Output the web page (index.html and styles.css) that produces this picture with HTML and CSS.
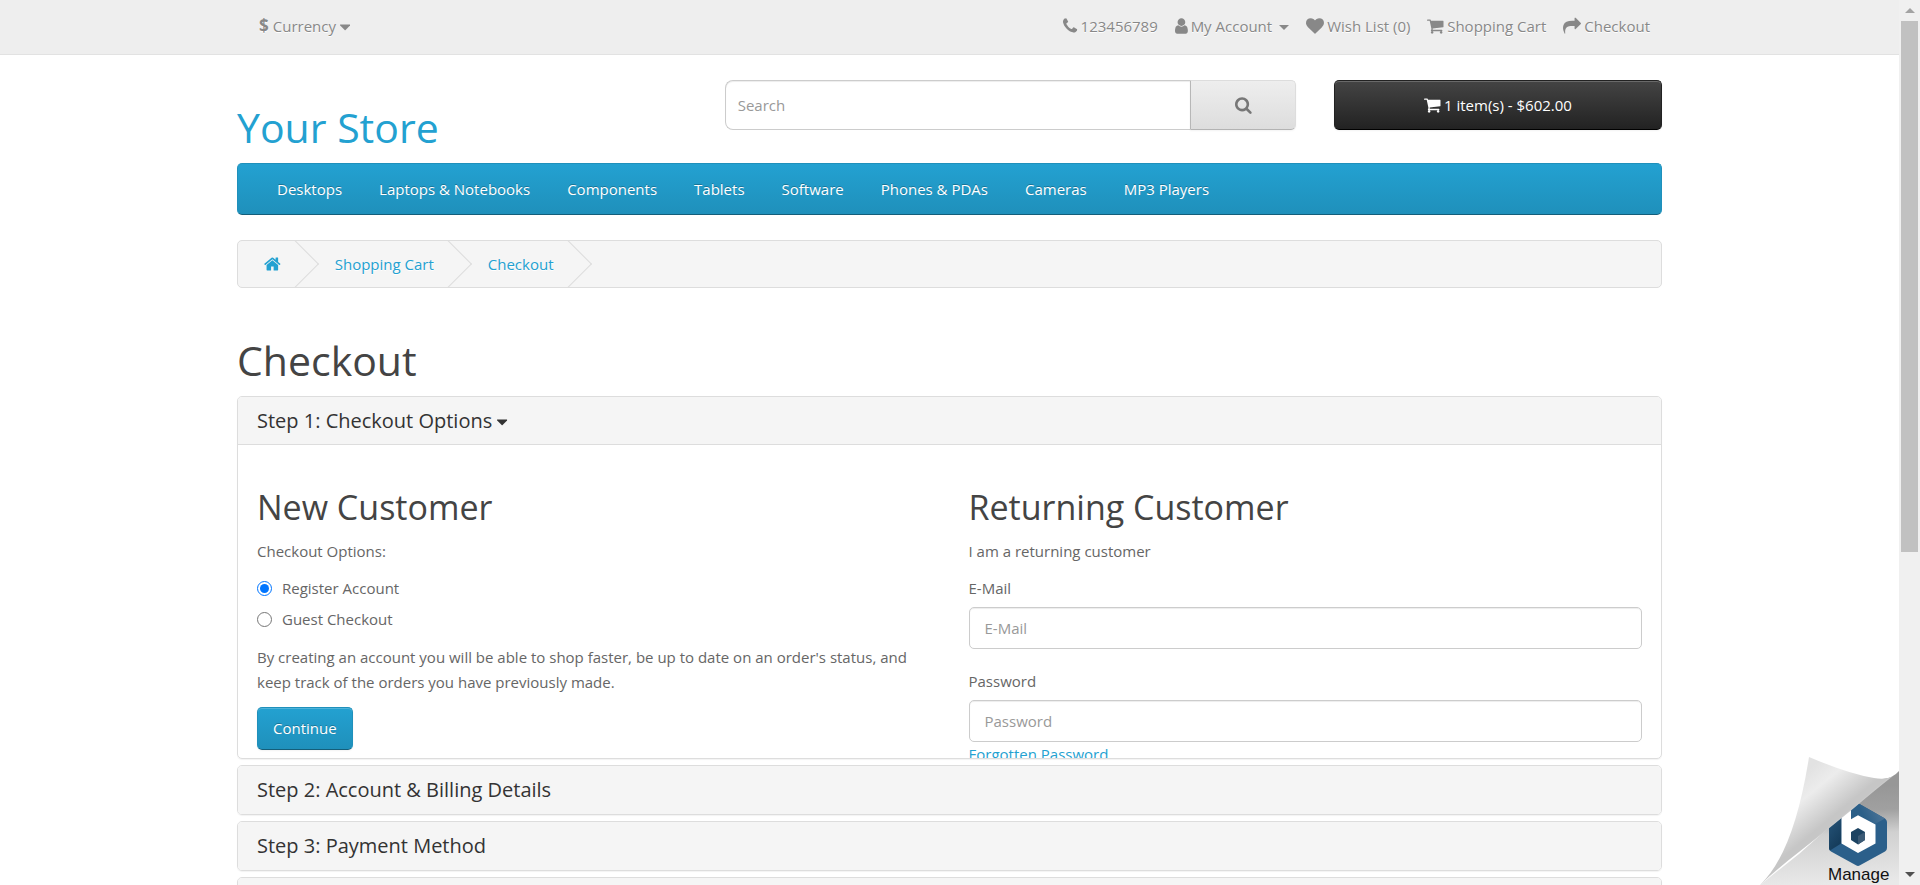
FILE: index.html
```html
<!DOCTYPE html>
<html lang="en">
<head>
<meta charset="utf-8">
<title>Checkout</title>
<link rel="stylesheet" href="styles.css">
</head>
<body>
<svg class="sprite" aria-hidden="true">
  <symbol id="cart" viewBox="64 0 1664 1792"><path d="M704 1536q0 52-38 90t-90 38-90-38-38-90 38-90 90-38 90 38 38 90zm896 0q0 52-38 90t-90 38-90-38-38-90 38-90 90-38 90 38 38 90zm128-1088v512q0 24-16.500 42.500t-40.500 21.500l-1044 122q13 60 13 70 0 16-24 64h920q26 0 45 19t19 45-19 45-45 19h-1024q-26 0-45-19t-19-45q0-11 8-31.500t16-36 21.500-40 15.500-29.500l-177-823h-204q-26 0-45-19t-19-45 19-45 45-19h256q16 0 28.500 6.500t19.500 15.500 13 24.500 8 26 5.500 29.500 4.500 26h1201q26 0 45 19t19 45z"/></symbol>
  <symbol id="caret" viewBox="384 0 1024 1792"><path d="M1408 704q0 26-19 45l-448 448q-19 19-45 19t-45-19l-448-448q-19-19-19-45t19-45 45-19h896q26 0 45 19t19 45z"/></symbol>
</svg>
<div class="window">
  <div class="page">
    <nav class="top">
      <div class="container top-row">
        <button class="currency" type="button"><strong>$</strong> <span>Currency</span> <svg class="icon" viewBox="384 0 1024 1792"><use href="#caret" x="384" width="1024" height="1792"/></svg></button>
        <ul class="top-links">
          <li><a href="#"><svg class="icon" viewBox="192 0 1408 1792"><path d="M1600 1240q0 27-10 70.500t-21 68.500q-21 50-122 106-94 51-186 51-27 0-53-3.500t-57.500-12.500-47-14.500-55.500-20.500-49-18q-98-35-175-83-127-79-264-216t-216-264q-48-77-83-175-3-9-18-49t-20.500-55.500-14.500-47-12.500-57.500-3.500-53q0-92 51-186 56-101 106-122 25-11 68.500-21t70.500-10q14 0 21 3 18 6 53 76 11 19 30 54t35 63.500 31 53.500q3 4 17.500 25t21.500 35.500 7 28.500q0 20-28.500 50t-62 55-62 53-28.500 46q0 9 5 22.500t8.500 20.500 14 24 11.500 19q76 137 174 235t235 174q2 1 19 11.500t24 14 20.500 8.500 22.500 5q18 0 46-28.500t53-62 55-62 50-28.500q14 0 28.500 7t35.500 21.500 25 17.500q25 15 53.500 31t63.500 35 54 30q70 35 76 53 3 7 3 21z"/></svg></a> <span>123456789</span></li>
          <li><a href="#"><svg class="icon" viewBox="256 0 1280 1792"><path d="M1536 1399q0 109-62.500 187t-150.500 78h-854q-88 0-150.500-78t-62.500-187q0-85 8.500-160.500t31.500-152 58.500-131 94-89 134.500-34.500q131 128 313 128t313-128q76 0 134.500 34.500t94 89 58.500 131 31.500 152 8.500 160.500zm-256-887q0 159-112.500 271.500t-271.500 112.500-271.500-112.500-112.500-271.500 112.500-271.500 271.500-112.500 271.500 112.500 112.500 271.500z"/></svg> <span>My Account</span> <i class="caret"></i></a></li>
          <li><a href="#"><svg class="icon" viewBox="0 0 1792 1792"><path d="M896 1664q-26 0-44-18l-624-602q-10-8-27.500-26t-55.500-65.500-68-97.500-53.500-121-23.500-138q0-220 127-344t351-124q62 0 126.500 21.500t120 58 95.500 68.500 76 68q36-36 76-68t95.500-68.500 120-58 126.500-21.500q224 0 351 124t127 344q0 221-229 450l-623 600q-18 18-44 18z"/></svg> <span>Wish List (0)</span></a></li>
          <li><a href="#"><svg class="icon" viewBox="64 0 1664 1792"><use href="#cart" x="64" width="1664" height="1792"/></svg> <span>Shopping Cart</span></a></li>
          <li><a href="#"><svg class="icon" viewBox="0 0 1792 1792"><path d="M1792 640q0 26-19 45l-512 512q-19 19-45 19t-45-19-19-45v-256h-224q-98 0-175.500 6t-154 21.500-133 42.500-105.500 69.500-80 101-48.500 138.500-17.500 181q0 55 5 123 0 6 2.500 23.500t2.500 26.500q0 15-8.500 25t-23.500 10q-16 0-28-17-7-9-13-22t-13.500-30-10.500-24q-127-285-127-451 0-199 53-333 162-403 875-403h224v-256q0-26 19-45t45-19 45 19l512 512q19 19 19 45z"/></svg> <span>Checkout</span></a></li>
        </ul>
      </div>
    </nav>

    <div class="container">
      <header class="header">
        <h1 class="logo"><a href="#">Your Store</a></h1>
        <form class="search">
          <input type="text" placeholder="Search" aria-label="Search">
          <button type="button" aria-label="Search"><svg class="icon" viewBox="64 0 1664 1792"><path d="M1216 832q0-185-131.500-316.500t-316.500-131.500-316.500 131.500-131.500 316.500 131.500 316.500 316.500 131.500 316.500-131.500 131.500-316.500zm512 832q0 52-38 90t-90 38q-54 0-90-38l-343-342q-179 124-399 124-143 0-273.500-55.500t-225-150-150-225-55.500-273.500 55.500-273.500 150-225 225-150 273.500-55.500 273.500 55.500 225 150 150 225 55.500 273.500q0 220-124 399l343 343q37 37 37 90z"/></svg></button>
        </form>
        <button class="cart" type="button"><svg class="icon" viewBox="64 0 1664 1792"><use href="#cart" x="64" width="1664" height="1792"/></svg> <span>1 item(s) - $602.00</span></button>
      </header>

      <nav class="menu">
        <a href="#">Desktops</a>
        <a href="#">Laptops &amp; Notebooks</a>
        <a href="#">Components</a>
        <a href="#">Tablets</a>
        <a href="#">Software</a>
        <a href="#">Phones &amp; PDAs</a>
        <a href="#">Cameras</a>
        <a href="#">MP3 Players</a>
      </nav>

      <ul class="breadcrumb">
        <li><a href="#" aria-label="Home"><svg class="icon" viewBox="64 0 1664 1792"><path d="M1472 992v480q0 26-19 45t-45 19h-384v-384h-256v384h-384q-26 0-45-19t-19-45v-480q0-1 .5-3t.5-3l575-474 575 474q1 2 1 6zm223-69l-62 74q-8 9-21 11h-3q-13 0-21-7l-692-577-692 577q-12 8-24 7-13-2-21-11l-62-74q-8-10-7-23.500t11-21.500l719-599q32-26 76-26t76 26l244 204v-195q0-14 9-23t23-9h192q14 0 23 9t9 23v408l219 182q10 8 11 21.500t-7 23.500z"/></svg></a></li>
        <li><a href="#">Shopping Cart</a></li>
        <li><a href="#">Checkout</a></li>
      </ul>

      <main>
        <h1 class="title">Checkout</h1>
        <div class="steps">
          <section class="panel open">
            <h4 class="panel-title"><a href="#">Step 1: Checkout Options <svg class="icon" viewBox="384 0 1024 1792"><use href="#caret" x="384" width="1024" height="1792"/></svg></a></h4>
            <div class="collapsing">
              <div class="panel-body">
                <div class="new-customer">
                  <h2>New Customer</h2>
                  <p>Checkout Options:</p>
                  <label class="radio"><input type="radio" name="account" checked> Register Account</label>
                  <label class="radio"><input type="radio" name="account"> Guest Checkout</label>
                  <p class="note">By creating an account you will be able to shop faster, be up to date on an order's status, and keep track of the orders you have previously made.</p>
                  <button class="primary" type="button">Continue</button>
                </div>
                <form class="returning">
                  <h2>Returning Customer</h2>
                  <p>I am a returning customer</p>
                  <div class="field">
                    <label for="email">E-Mail</label>
                    <input id="email" type="text" placeholder="E-Mail">
                  </div>
                  <div class="field">
                    <label for="password">Password</label>
                    <input id="password" type="password" placeholder="Password">
                    <a href="#">Forgotten Password</a>
                  </div>
                </form>
              </div>
            </div>
          </section>
          <section class="panel"><h4 class="panel-title">Step 2: Account &amp; Billing Details</h4></section>
          <section class="panel"><h4 class="panel-title">Step 3: Payment Method</h4></section>
          <section class="panel"><div class="panel-title"></div></section>
        </div>
      </main>
    </div>

    <a class="peel" href="#" aria-label="Manage">
      <svg viewBox="0 0 140 128">
        <defs>
          <linearGradient id="under" x1="0.4" y1="0" x2="0.45" y2="1">
            <stop offset="0.15" stop-color="#979797"/><stop offset="0.36" stop-color="#a0a0a0"/><stop offset="0.56" stop-color="#d0d0d0"/><stop offset="1" stop-color="#e9e9e9"/>
          </linearGradient>
          <linearGradient id="fold" gradientUnits="userSpaceOnUse" x1="38" y1="22" x2="80" y2="73">
            <stop offset="0" stop-color="#e2e2e2"/><stop offset="0.3" stop-color="#ececec"/><stop offset="0.78" stop-color="#c6c6c6"/><stop offset="0.86" stop-color="#c6c6c6"/><stop offset="0.93" stop-color="#d8d8d8"/><stop offset="1" stop-color="#c4c4c4"/>
          </linearGradient>
          <linearGradient id="steel" x1="0.3" y1="0.4" x2="1" y2="0.2">
            <stop offset="0" stop-color="#2b5f88"/><stop offset="1" stop-color="#54799b"/>
          </linearGradient>
          <linearGradient id="navy" x1="0" y1="0" x2="0.4" y2="1">
            <stop offset="0" stop-color="#2a5a80"/><stop offset="1" stop-color="#153c5b"/>
          </linearGradient>
        </defs>
        <path fill="url(#under)" d="M1 128L40 97 124 22Q134 21 140 14V128Z"/>
        <path fill="#2b5f8a" d="M97 47.500Q99 46 101 47.300L126 61.500Q128 63 128 65V91Q128 93 126 94.500L101 108.300Q99 109.500 97 108.300L72 94.500Q70 93 70 91V65Q70 63 72 61.500Z"/>
        <path fill="url(#steel)" d="M92 49L97 47.500Q99 46 101 47.300L126 61.500 116 67 99 58.300 92 62Z"/>
        <path fill="url(#navy)" d="M70 60L82.500 52V86.300L71 93.500Q70 92 70 91Z"/>
        <path fill="#fff" d="M82.500 48H92V62.200L99 58.300 116.500 67.500V86.500L99 96 82.500 86.500Z"/>
        <path fill="#1c4362" d="M99 71L106 75V83L99 87.500 92 83V75Z"/>
        <path fill="#3b5a75" d="M99 79L106 75V83L99 87.500Z"/>
        <path fill="url(#fold)" d="M50 0Q90 17 115 21 127 23 134 19 116 33 95 51 67 74 40 95 19 111 1 128 35 96 50 0Z"/>
        <text x="69" y="123">Manage</text>
      </svg>
    </a>
  </div>
  <div class="scrollbar" aria-hidden="true">
    <i class="arrow up"></i>
    <div class="thumb"></div>
    <i class="arrow down"></i>
  </div>
</div>
</body>
</html>
```

FILE: styles.css
```css
*, *::before, *::after { box-sizing: border-box; }

body {
  margin: 0;
  font: 400 15px/25px "Open Sans", sans-serif;
  color: #666;
  background: #fff;
  overflow: hidden;
}

h1, h2, h4, p, ul { margin: 0; padding: 0; font-weight: 400; }
ul { list-style: none; }
a { color: #23a1d1; text-decoration: none; }
button, input { font: inherit; margin: 0; }
button { cursor: pointer; }

.sprite { display: none; }
.icon { height: 18px; fill: currentColor; vertical-align: -3px; flex: none; }

.window {
  display: grid;
  grid-template-columns: minmax(0, 1fr) 21px;
  height: 100vh;
}
.page { position: relative; overflow: hidden; }
.container { max-width: 1425px; margin: 0 auto; }

/* Top bar */
.top { background: #eee; border-bottom: 1px solid #e2e2e2; text-shadow: 0 1px 0 #fff; }
.top-row { display: flex; justify-content: space-between; padding: 13px 12px 15px 22px; }
.currency {
  display: flex;
  align-items: center;
  gap: 4px;
  margin-top: 1px;
  height: 25px;
  padding: 0;
  border: 0;
  background: none;
  color: #888;
  text-shadow: inherit;
}
.currency strong { font-size: 17px; line-height: 25px; margin-bottom: 2px; }
.top-links { display: flex; gap: 17px; color: #888; }
.top-links li, .top-links li > a { display: flex; align-items: center; gap: 3px; }
.top-links a { color: #888; }
.top-links .icon { margin-bottom: 1px; }
.caret {
  margin: 2px 0 0 4px;
  border: 5px solid transparent;
  border-top-color: currentColor;
  border-bottom: 0;
}

/* Header */
.header {
  display: grid;
  grid-template-columns: repeat(12, minmax(0, 1fr));
  column-gap: 38px;
  padding: 25px 0 13px;
}
.logo { grid-column: span 4; padding-top: 25px; font-size: 41px; line-height: 45px; }
.search { grid-column: span 5; display: flex; height: 50px; }
.search input {
  flex: 1;
  min-width: 0;
  padding: 0 12px;
  border: 1px solid #ccc;
  border-right: 0;
  border-radius: 8px 0 0 8px;
  box-shadow: inset 0 1px 1px rgba(0, 0, 0, 0.075);
}
.search button {
  display: flex;
  align-items: center;
  justify-content: center;
  width: 106px;
  border: 1px solid #ddd;
  border-color: #ddd #ddd #b3b3b3 #b7b7b7;
  border-radius: 0 5px 5px 0;
  background: linear-gradient(#eee, #ddd);
  box-shadow: 0 1px 2px rgba(0, 0, 0, 0.05);
  color: #777;
}
.cart {
  grid-column: span 3;
  display: flex;
  align-items: center;
  justify-content: center;
  gap: 3px;
  height: 50px;
  border: 1px solid #222;
  border-color: #222 #222 #000;
  border-radius: 5px;
  background: linear-gradient(#444, #222);
  box-shadow: inset 0 1px 0 rgba(255, 255, 255, 0.2), 0 1px 2px rgba(0, 0, 0, 0.05);
  color: #fff;
}
::placeholder { color: #999; opacity: 1; }

/* Menu */
.menu {
  display: flex;
  margin-bottom: 25px;
  padding: 0 20px;
  border: 1px solid #1f90bb;
  border-bottom-color: #145e7a;
  border-radius: 5px;
  background: linear-gradient(#23a1d1, #1f90bb);
}
.menu a { padding: 13px 18px 12px 19px; color: #fff; text-shadow: 0 -1px 0 rgba(0, 0, 0, 0.25); }

/* Breadcrumb */
.breadcrumb {
  display: flex;
  gap: 4px;
  overflow: hidden;
  margin-bottom: 50px;
  padding-left: 1px;
  border: 1px solid #ddd;
  border-radius: 5px;
  background: #f5f5f5;
  text-shadow: 0 1px 0 #fff;
}
.breadcrumb li { position: relative; padding: 11px 25px 10px; }
.breadcrumb li::after {
  content: "";
  position: absolute;
  top: 6px;
  right: -6px;
  width: 34px;
  height: 34px;
  border: 1px solid #ddd;
  border-width: 1px 1px 0 0;
  transform: rotate(45deg);
  pointer-events: none;
}

/* Checkout steps */
.title { margin-bottom: 13px; font-size: 41px; line-height: 45px; color: #444; }
.steps { display: grid; gap: 6px; }
.panel {
  overflow: hidden;
  border: 1px solid #ddd;
  border-radius: 5px;
  box-shadow: 0 1px 1px rgba(0, 0, 0, 0.05);
}
.panel-title {
  padding: 13px 19px 12px;
  border-bottom: 1px solid #f5f5f5;
  background: #f5f5f5;
  font-size: 20px;
  line-height: 22px;
  color: #333;
}
.panel-title a { color: inherit; }
.open .panel-title { border-color: #ddd; }

/* The first step is caught while it slides open */
.collapsing { height: 313px; overflow: hidden; }
.panel-body { display: grid; grid-template-columns: 1fr 1fr; gap: 38px; padding: 44px 19px; }
h2 { margin-bottom: 13px; font-size: 34px; line-height: 37px; color: #444; }
.panel-body p { margin-bottom: 12px; }
.radio { display: flex; align-items: center; gap: 10px; margin-bottom: 6px; }
.radio input { width: 15px; height: 15px; }
.radio + .note { margin-top: 13px; }
.primary {
  height: 43px;
  padding: 0 15px;
  border: 1px solid #1f90bb;
  border-bottom-color: #145e7a;
  border-radius: 5px;
  background: linear-gradient(#23a1d1, #1f90bb);
  box-shadow: inset 0 1px 0 rgba(255, 255, 255, 0.2), 0 1px 2px rgba(0, 0, 0, 0.05);
  color: #fff;
  text-shadow: 0 -1px 0 rgba(0, 0, 0, 0.25);
}
.field { margin-bottom: 20px; }
.field label { display: block; margin-bottom: 6px; }
.field input {
  display: block;
  width: 100%;
  height: 42px;
  padding: 0 15px;
  border: 1px solid #ccc;
  border-radius: 5px;
  box-shadow: inset 0 1px 1px rgba(0, 0, 0, 0.075);
}

/* Page-corner badge */
.peel { position: absolute; right: 0; bottom: 0; width: 140px; height: 128px; }
.peel svg { display: block; width: 100%; height: 100%; }
.peel text { font: 17px "Liberation Sans", sans-serif; fill: #111; }

/* Scrollbar */
.scrollbar {
  display: grid;
  grid-template-rows: 21px minmax(0, 1fr) 21px;
  justify-items: center;
  align-items: center;
  background: #f0f0f0;
}
.thumb { align-self: start; width: 17px; height: 63%; background: #c1c1c1; }
.arrow { border: 5px solid transparent; }
.up { border-top: 0; border-bottom-color: #a3a3a3; }
.down { border-bottom: 0; border-top-color: #505050; }
```
